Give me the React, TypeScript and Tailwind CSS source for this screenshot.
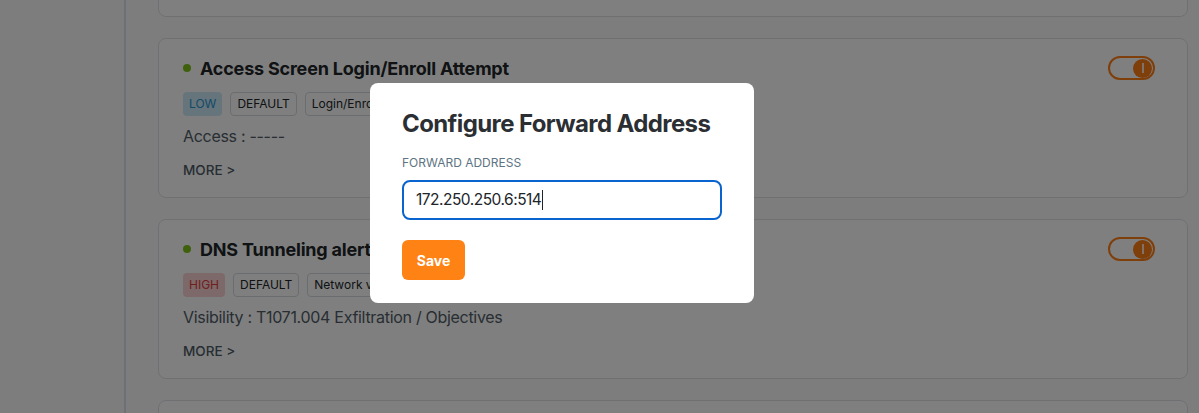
import React from "react";

function Toggle() {
  return (
    <div className="flex h-[24px] w-[47px] items-center justify-end rounded-full border-2 border-[#fd7e14] pr-[1px]">
      <div className="flex h-[19px] w-[19px] items-center justify-center rounded-full bg-[#fd7e14]">
        <div className="h-[10px] w-[2px] bg-white/80" />
      </div>
    </div>
  );
}

function Tag({ children, kind }: { children: React.ReactNode; kind?: "low" | "high" }) {
  if (kind === "low")
    return (
      <span className="flex h-[24px] items-center rounded-[4px] bg-[#cde9f7] px-[6px] text-[12px] text-[#2596d1]">
        {children}
      </span>
    );
  if (kind === "high")
    return (
      <span className="flex h-[24px] items-center rounded-[4px] bg-[#fbd3d3] px-[6px] text-[12px] text-[#e03b3b]">
        {children}
      </span>
    );
  return (
    <span className="flex h-[24px] items-center whitespace-nowrap rounded-[4px] border border-[#d5dadf] px-[6px] text-[12px] text-[#212529]">
      {children}
    </span>
  );
}

function Card({
  title,
  level,
  levelKind,
  third,
  desc,
}: {
  title: string;
  level: string;
  levelKind: "low" | "high";
  third: string;
  desc: string;
}) {
  return (
    <div className="flex h-[160px] shrink-0 justify-between rounded-[8px] border border-[#dde1e5] bg-white pl-[24px] pr-[32px] pt-[17px]">
      <div className="flex flex-col">
        <div className="flex h-[24px] items-center gap-[9px]">
          <span className="h-[8px] w-[8px] rounded-full bg-[#7ec21c]" />
          <span className="whitespace-nowrap text-[18px] font-bold tracking-[-0.2px] text-[#212529]">{title}</span>
        </div>
        <div className="mt-[12px] flex gap-[8px]">
          <Tag kind={levelKind}>{level}</Tag>
          <Tag>DEFAULT</Tag>
          <Tag>{third}</Tag>
        </div>
        <div className="mt-[8px] whitespace-nowrap text-[16px] leading-[24px] tracking-[-0.3px] text-[#505c66]">{desc}</div>
        <div className="mt-[12px] text-[13.5px] font-medium leading-[20px] text-[#4d5a66]">MORE &gt;</div>
      </div>
      <div>
        <Toggle />
      </div>
    </div>
  );
}

export default function App() {
  return (
    <div
      className="relative h-[413px] w-[1199px] overflow-hidden bg-[#fbfbfc]"
      style={{ fontFamily: "Inter, 'Noto Sans', sans-serif" }}
    >
      <div className="flex h-full">
        <div className="h-full w-[126px] shrink-0 border-r-2 border-[#dbe3ea] bg-[#fbfbfc]" />
        <div className="flex flex-1 flex-col gap-[21px] pl-[32px] pr-[11px]">
          <div className="-mt-[144px] h-[161px] shrink-0 rounded-[8px] border border-[#dde1e5] bg-white" />
          <Card
            title="Access Screen Login/Enroll Attempt"
            level="LOW"
            levelKind="low"
            third="Login/Enroll Attempt"
            desc="Access : -----"
          />
          <Card
            title="DNS Tunneling alert"
            level="HIGH"
            levelKind="high"
            third="Network visibility"
            desc="Visibility : T1071.004 Exfiltration / Objectives"
          />
          <div className="h-[160px] shrink-0 rounded-[8px] border border-[#dde1e5] bg-white" />
        </div>
      </div>

      <div className="absolute inset-0 bg-black/50" />

      <div className="absolute left-[370px] top-[83px] flex h-[220px] w-[384px] flex-col rounded-[8px] bg-white px-[32px] pt-[26px]">
        <div className="whitespace-nowrap text-[24px] font-bold leading-[30px] tracking-[-0.6px] text-[#2b2f33]">
          Configure Forward Address
        </div>
        <div className="mt-[16px] text-[12px] leading-[16px] text-[#5d7482]">FORWARD ADDRESS</div>
        <div className="mt-[9px] flex h-[40px] w-[320px] items-center rounded-[8px] border-2 border-[#0a64d0] pl-[12px] text-[15.5px] tracking-[-0.5px] text-[#212529]">
          172.250.250.6:514<span className="ml-[1px] h-[20px] w-[1px] bg-[#212529]" />
        </div>
        <div className="mt-[20px] flex h-[40px] w-[63px] items-center justify-center rounded-[6px] bg-[#ff8214] text-[14px] font-bold text-white">
          Save
        </div>
      </div>
    </div>
  );
}
